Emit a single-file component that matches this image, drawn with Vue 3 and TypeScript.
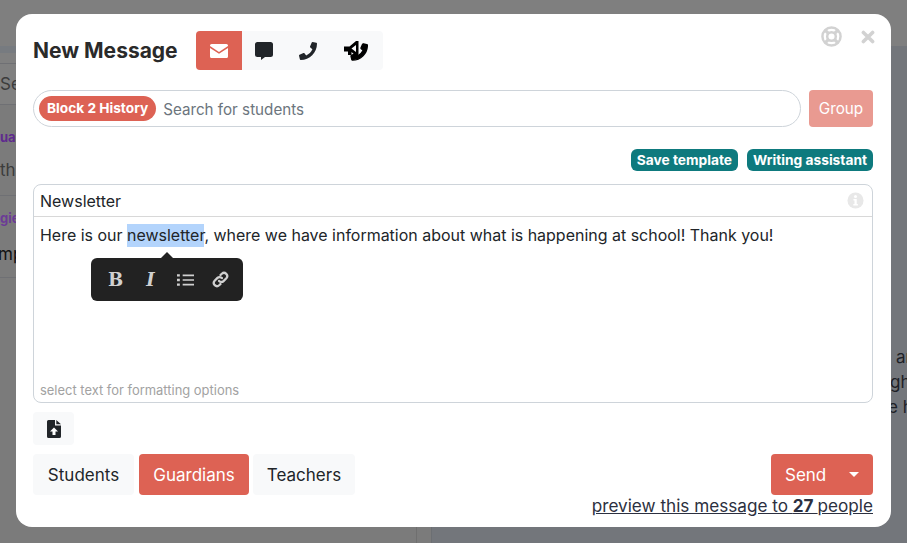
<script setup lang="ts">
const channels = [
  { id: 'email', active: true },
  { id: 'chat', active: false },
  { id: 'phone', active: false },
  { id: 'announce', active: false },
]
const audiences = [
  { label: 'Students', active: false },
  { label: 'Guardians', active: true },
  { label: 'Teachers', active: false },
]
const phonePath =
  'M493.4 24.6l-104-24c-11.300-2.600-22.900 3.300-27.500 13.900l-48 112c-4.200 9.800-1.400 21.300 6.900 28l60.600 49.600c-36 76.700-98.900 140.500-177.200 177.200l-49.600-60.600c-6.800-8.300-18.200-11.100-28-6.900l-112 48C3.900 366.500-2 378.100.6 389.400l24 104C27.100 504.200 36.700 512 48 512c256.100 0 464-207.500 464-464 0-11.200-7.700-20.900-18.600-23.400z'
</script>

<template>
  <div class="page">
    <div class="backdrop">
      <div class="bg-top"></div>
      <div class="bg-main">
        <div class="bg-left">
          <div class="bg-strip"></div>
          <div class="bg-gap"></div>
          <div class="bg-search">Se</div>
          <div class="bg-item first"><b>ua</b><span>th</span></div>
          <div class="bg-item second"><b>gie</b><span>mpl</span></div>
        </div>
        <div class="bg-mid"></div>
        <div class="bg-right">
          <div class="l1">ar</div>
          <div class="l2">gh</div>
          <div class="l3">e h</div>
        </div>
      </div>
    </div>

    <section class="modal">
      <div class="corner">
        <svg viewBox="0 0 22 22" width="21" height="21">
          <circle cx="11" cy="11" r="9.500" fill="none" stroke="#d2d2d2" stroke-width="2.600" />
          <circle cx="11" cy="11" r="4.500" fill="none" stroke="#d2d2d2" stroke-width="2.600" />
          <path d="M4.500 4.500l3.500 3.500M17.500 4.500l-3.500 3.500M4.500 17.500l3.500-3.500M17.500 17.500l-3.500-3.500" stroke="#d2d2d2" stroke-width="3.400" />
        </svg>
        <svg viewBox="0 0 14 14" width="14" height="14">
          <path d="M2.400 2.400l9.200 9.200M11.600 2.400l-9.200 9.200" stroke="#d2d2d2" stroke-width="3.600" stroke-linecap="round" />
        </svg>
      </div>

      <header class="head">
        <h1>New Message</h1>
        <div class="channels">
          <button v-for="c in channels" :key="c.id" class="channel" :class="[c.id, { on: c.active }]">
            <svg v-if="c.id === 'email'" viewBox="0 0 18 14" width="18" height="14">
              <path d="M1.600 0h14.800A1.600 1.600 0 0 1 18 1.600v.5L9 8 0 2.100v-.5A1.600 1.600 0 0 1 1.600 0z" fill="#fff" />
              <path d="M0 3.900l9 5.900 9-5.900v8.500a1.600 1.600 0 0 1-1.600 1.600H1.600A1.600 1.600 0 0 1 0 12.400z" fill="#fff" />
            </svg>
            <svg v-else-if="c.id === 'chat'" viewBox="0 0 18 18" width="18" height="18">
              <path d="M2.500 0h13A2.500 2.500 0 0 1 18 2.500v10a2.500 2.500 0 0 1-2.500 2.500H10l-4 3v-3H2.500A2.500 2.500 0 0 1 0 12.500v-10A2.500 2.500 0 0 1 2.500 0z" fill="#212529" />
            </svg>
            <svg v-else-if="c.id === 'phone'" viewBox="0 0 512 512" width="18" height="18">
              <path :d="phonePath" fill="#212529" />
            </svg>
            <svg v-else viewBox="0 0 24 20" width="24" height="20">
              <path :d="phonePath" fill="#000" stroke="#000" stroke-width="40" transform="translate(7 2.800) scale(.032)" />
              <path d="M0 5.500h5.500L12 0h2.500v15h-2.500L7.500 11v3H4v-3.500H0z" fill="#000" />
              <path d="M7.500 7.500l4.500-3.400v6.800z" fill="#f8f9fa" />
            </svg>
          </button>
        </div>
      </header>

      <div class="recipients">
        <div class="search">
          <span class="chip">Block 2 History</span>
          <span class="placeholder">Search for students</span>
        </div>
        <button class="group">Group</button>
      </div>

      <div class="tools">
        <span class="teal">Save template</span>
        <span class="teal">Writing assistant</span>
      </div>

      <div class="composer">
        <div class="subject">
          <span>Newsletter</span>
          <svg viewBox="0 0 18 18" width="17" height="17">
            <circle cx="9" cy="9" r="8.500" fill="#e8e8e8" />
            <circle cx="9" cy="4.800" r="1.600" fill="#fff" />
            <path d="M6.800 7.500h3.500v5.300h1.200v1.600H6.700v-1.600h1.200V9.100H6.800z" fill="#fff" />
          </svg>
        </div>
        <div class="body">
          <p>Here is our <mark>newsletter</mark>, where we have information about what is happening at school! Thank you!</p>
          <div class="bubble">
            <span class="fmt">B</span>
            <span class="fmt italic">I</span>
            <svg viewBox="0 0 18 14" width="17" height="14">
              <path d="M6 2h12M6 7h12M6 12h12" stroke="#d0d0d0" stroke-width="1.800" />
              <path d="M0 2h3M0 7h3M0 12h3" stroke="#d0d0d0" stroke-width="2.400" />
            </svg>
            <svg viewBox="0 0 18 18" width="17" height="17">
              <path d="M7.500 10.500a3.200 3.200 0 0 0 4.700.2l3-3a3.400 3.400 0 0 0-4.800-4.800l-1.400 1.400" fill="none" stroke="#d0d0d0" stroke-width="2.400" stroke-linecap="round" />
              <path d="M10.500 7.500a3.200 3.200 0 0 0-4.700-.2l-3 3a3.400 3.400 0 0 0 4.800 4.800l1.400-1.400" fill="none" stroke="#d0d0d0" stroke-width="2.400" stroke-linecap="round" />
            </svg>
          </div>
          <div class="hint">select text for formatting options</div>
        </div>
      </div>

      <button class="attach">
        <svg viewBox="0 0 14 18" width="14" height="18">
          <path d="M1.500 0H8v5.500h6v11a1.500 1.500 0 0 1-1.500 1.500h-11A1.500 1.500 0 0 1 0 16.500v-15A1.500 1.500 0 0 1 1.500 0z" fill="#212529" />
          <path d="M9.300 0L14 4.300H9.300z" fill="#212529" />
          <path d="M7 7.500l4 4H8.500V15h-3v-3.500H3z" fill="#fff" />
        </svg>
      </button>

      <div class="foot">
        <div class="audience">
          <button v-for="a in audiences" :key="a.label" class="aud" :class="{ on: a.active }">{{ a.label }}</button>
        </div>
        <div class="send-wrap">
          <button class="send">
            <span>Send</span>
            <i class="caret"></i>
          </button>
          <a class="preview">preview this message to <b>27 </b>people</a>
        </div>
      </div>
    </section>
  </div>
</template>

<style>
html, body { margin: 0; padding: 0; overflow: hidden; }
</style>

<style scoped>
.page {
  position: relative;
  width: 907px;
  height: 543px;
  overflow: hidden;
  font-family: Inter, "Liberation Sans", sans-serif;
  color: #212529;
}
.backdrop { width: 100%; height: 100%; display: flex; flex-direction: column; background: #7b7b7b; }
.bg-top { height: 46px; flex: none; background: #7f7f7f; }
.bg-main { flex: 1; display: flex; min-height: 0; }
.bg-left { width: 417px; flex: none; box-sizing: border-box; border-right: 1px solid #6f6f6f; white-space: nowrap; overflow: hidden; }
.bg-strip { height: 7px; background: #777b80; }
.bg-gap { height: 10px; border-bottom: 1px solid #6f7074; background: #808080; }
.bg-search { height: 40px; line-height: 41px; border-bottom: 1px solid #6f7074; font-size: 17px; color: #3c3c3c; background: #808080; }
.bg-item { display: flex; flex-direction: column; border-bottom: 1px solid #6f7074; }
.bg-item b { font-size: 13px; line-height: 16px; color: #5f2a8e; }
.bg-item span { font-size: 17px; line-height: 24px; color: #232323; }
.first { height: 91px; padding-top: 24px; box-sizing: border-box; gap: 13px; }
.first span { color: #3c3c3c; }
.second { height: 82px; padding-top: 14px; box-sizing: border-box; gap: 16px; }
.second b { color: #6b3a96; }
.second span { margin-left: -2px; color: #111; }
.bg-mid { width: 15px; flex: none; box-sizing: border-box; border-right: 1px solid #6c6f73; }
.bg-right { flex: 1; background: #73767b; padding: 299px 0 0 459px; overflow: hidden; font-size: 17px; line-height: 25px; color: #1e2127; white-space: nowrap; }
.l1 { margin-left: 5px; }
.l2 { margin-left: -1px; }
.l3 { margin-left: -3px; }

.modal {
  position: absolute;
  left: 16px;
  top: 14px;
  width: 875px;
  height: 513px;
  box-sizing: border-box;
  padding: 17px 18px 0 17px;
  background: #fff;
  border-radius: 16px;
}
.corner {
  position: absolute;
  right: 16px;
  top: 12px;
  display: flex;
  align-items: center;
  gap: 19px;
}
.head { display: flex; align-items: center; height: 39px; gap: 18px; }
h1 { margin: 0; width: 145px; font-size: 21px; font-weight: 700; line-height: 39px; white-space: nowrap; color: #2a2a2a; }
.channels { display: flex; background: #f8f9fa; border-radius: 4px; overflow: hidden; }
button { border: 0; font: inherit; color: inherit; padding: 0; }
.channel {
  height: 39px;
  display: flex;
  align-items: center;
  justify-content: center;
  background: transparent;
}
.channel.email { width: 46px; }
.channel.chat { width: 43px; }
.channel.phone { width: 45px; }
.channel.announce { width: 53px; padding-right: 2px; box-sizing: border-box; }
.channel.on { background: #dd6254; }
.recipients { display: flex; gap: 8px; margin-top: 20px; }
.search {
  flex: 1;
  height: 37px;
  box-sizing: border-box;
  border: 1px solid #ced4da;
  border-radius: 19px;
  display: flex;
  align-items: center;
  padding-left: 5px;
  gap: 7px;
}
.chip {
  background: #dd6254;
  color: #fff;
  font-size: 13.700px;
  font-weight: 700;
  border-radius: 13px;
  height: 25px;
  line-height: 25px;
  padding: 0 8px;
}
.placeholder { color: #6c757d; font-size: 15.200px; padding-top: 2px; }
.group {
  width: 64px;
  height: 37px;
  background: #e99a91;
  color: #fff;
  border-radius: 4px;
  font-size: 15.300px;
}
.tools { display: flex; justify-content: flex-end; gap: 9px; margin-top: 22px; }
.teal {
  background: #0e7a7e;
  color: #fff;
  font-size: 13.750px;
  font-weight: 700;
  height: 22px;
  line-height: 22px;
  padding: 0 6px;
  border-radius: 6px;
}
.composer {
  margin-top: 13px;
  border: 1px solid #ced4da;
  border-radius: 8px;
  height: 219px;
  box-sizing: border-box;
  display: flex;
  flex-direction: column;
}
.subject {
  height: 32px;
  flex: none;
  box-sizing: border-box;
  border-bottom: 1px solid #d8d8d8;
  display: flex;
  align-items: center;
  justify-content: space-between;
  padding: 0 8px 0 6px;
  font-size: 16px;
}
.body { position: relative; flex: 1; padding: 9px 6px 8px; font-size: 15.970px; line-height: 20px; }
.body p { margin: 0; white-space: nowrap; }
mark { background: #b3d4fc; color: inherit; padding: 2px 0; }
.bubble {
  position: absolute;
  left: 57px;
  top: 41px;
  width: 152px;
  height: 43px;
  background: #222;
  border-radius: 6px;
  display: flex;
  align-items: center;
  justify-content: space-around;
  padding: 0 5px 0 7px;
  box-sizing: border-box;
}
.bubble::before {
  content: "";
  position: absolute;
  left: 70px;
  top: -6px;
  border: 6px solid transparent;
  border-top: 0;
  border-bottom-color: #222;
}
.fmt { color: #d0d0d0; font-family: "DejaVu Serif", "Liberation Serif", serif; font-size: 18px; width: 17px; text-align: center; font-weight: 700; }
.italic { font-style: italic; }
.hint { position: absolute; left: 6px; bottom: 4px; font-size: 12.950px; line-height: 16px; color: #a2a2a2; white-space: nowrap; }
.attach {
  display: flex;
  align-items: center;
  justify-content: center;
  width: 41px;
  height: 33px;
  background: #f8f9fa;
  border-radius: 4px;
  margin-top: 9px;
}
.foot { display: flex; justify-content: space-between; margin-top: 9px; }
.audience { display: grid; grid-template-columns: 101px 110px 101px; gap: 5px; }
.aud {
  height: 41px;
  background: #f8f9fa;
  border-radius: 4px;
  font-size: 17px;
}
.aud.on { background: #dd6254; color: #fff; }
.aud:last-child { margin-left: -1px; width: 102px; }
.send-wrap { display: flex; flex-direction: column; align-items: flex-end; }
.send {
  width: 102px;
  height: 41px;
  background: #dd6254;
  color: #fff;
  border-radius: 4px;
  display: flex;
  align-items: center;
  justify-content: space-between;
  padding: 0 14px;
  box-sizing: border-box;
  font-size: 17px;
}
.caret { border: 5px solid transparent; border-bottom: 0; border-top-color: #fff; }
.preview { font-size: 17.150px; line-height: 22px; color: #2c3040; text-decoration: underline; white-space: nowrap; }
</style>
